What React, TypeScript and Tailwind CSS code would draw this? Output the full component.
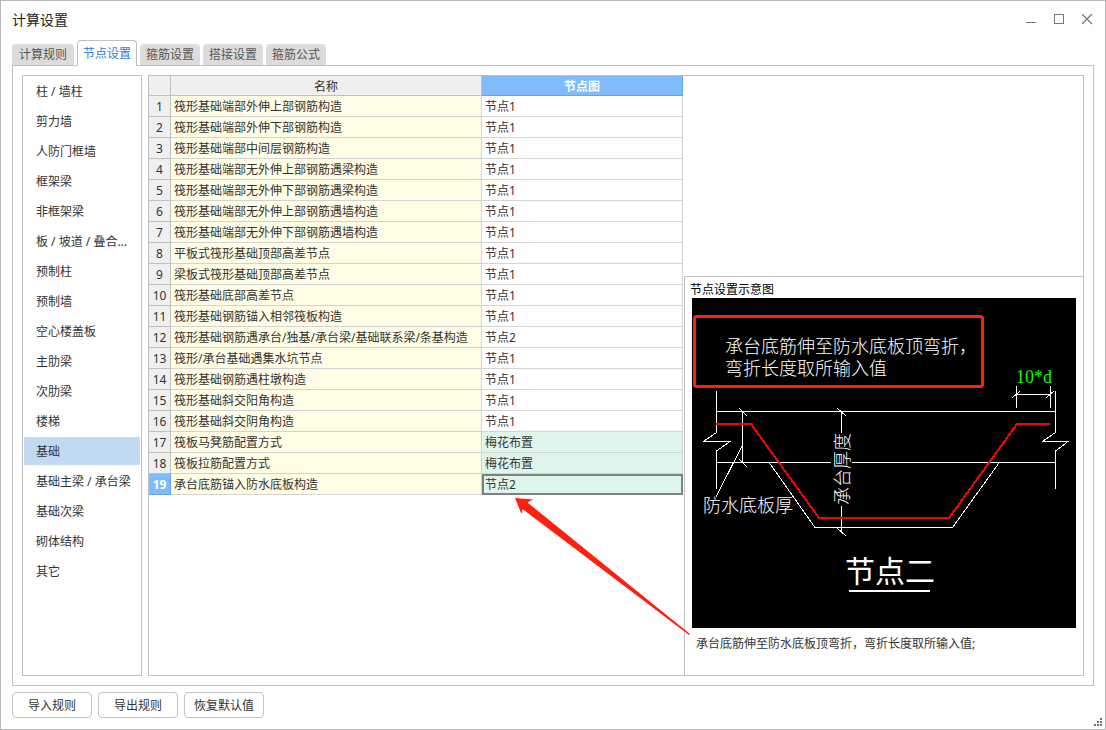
import { useState } from 'react'

interface NodeRow {
    name: string
    node: string
    changed?: boolean
}

const tabs = ['计算规则', '节点设置', '箍筋设置', '搭接设置', '箍筋公式']

const categories = [
    '柱 / 墙柱',
    '剪力墙',
    '人防门框墙',
    '框架梁',
    '非框架梁',
    '板 / 坡道 / 叠合...',
    '预制柱',
    '预制墙',
    '空心楼盖板',
    '主肋梁',
    '次肋梁',
    '楼梯',
    '基础',
    '基础主梁 / 承台梁',
    '基础次梁',
    '砌体结构',
    '其它',
]

const rows: NodeRow[] = [
    { name: '筏形基础端部外伸上部钢筋构造', node: '节点1' },
    { name: '筏形基础端部外伸下部钢筋构造', node: '节点1' },
    { name: '筏形基础端部中间层钢筋构造', node: '节点1' },
    { name: '筏形基础端部无外伸上部钢筋遇梁构造', node: '节点1' },
    { name: '筏形基础端部无外伸下部钢筋遇梁构造', node: '节点1' },
    { name: '筏形基础端部无外伸上部钢筋遇墙构造', node: '节点1' },
    { name: '筏形基础端部无外伸下部钢筋遇墙构造', node: '节点1' },
    { name: '平板式筏形基础顶部高差节点', node: '节点1' },
    { name: '梁板式筏形基础顶部高差节点', node: '节点1' },
    { name: '筏形基础底部高差节点', node: '节点1' },
    { name: '筏形基础钢筋锚入相邻筏板构造', node: '节点1' },
    { name: '筏形基础钢筋遇承台/独基/承台梁/基础联系梁/条基构造', node: '节点2' },
    { name: '筏形/承台基础遇集水坑节点', node: '节点1' },
    { name: '筏形基础钢筋遇柱墩构造', node: '节点1' },
    { name: '筏形基础斜交阳角构造', node: '节点1' },
    { name: '筏形基础斜交阴角构造', node: '节点1' },
    { name: '筏板马凳筋配置方式', node: '梅花布置', changed: true },
    { name: '筏板拉筋配置方式', node: '梅花布置', changed: true },
    { name: '承台底筋锚入防水底板构造', node: '节点2', changed: true },
]

const actions = ['导入规则', '导出规则', '恢复默认值']

function TitleBar() {
    return (
        <header className="flex h-[39px] items-center justify-between pr-3 pb-0.5 pl-[11px]">
            <h1 className="text-sm text-[#222]">计算设置</h1>
            <div className="flex gap-[17px] text-[#777]">
                <button type="button" aria-label="最小化">
                    <svg width="11" height="11" viewBox="0 0 11 11" shapeRendering="crispEdges" className="block">
                        <path d="M0 8.5H10" stroke="currentColor" />
                    </svg>
                </button>
                <button type="button" aria-label="最大化">
                    <svg width="11" height="11" viewBox="0 0 11 11" shapeRendering="crispEdges" className="block">
                        <rect x="0.5" y="0.5" width="9" height="9" fill="none" stroke="currentColor" />
                    </svg>
                </button>
                <button type="button" aria-label="关闭">
                    <svg width="11" height="11" viewBox="0 0 11 11" className="block">
                        <path d="M0 0L10 10M10 0L0 10" stroke="currentColor" strokeWidth="1.3" />
                    </svg>
                </button>
            </div>
        </header>
    )
}

function NodeDiagram() {
    return (
        <svg viewBox="0 0 384 330" className="block w-full bg-black" role="img" aria-label="节点二">
            {/* note frame */}
            <rect x="2.5" y="18.5" width="288" height="70" rx="2" fill="none" stroke="#fd2010" strokeWidth="3" />

            <g fill="none" stroke="#fff" shapeRendering="crispEdges">
                {/* slab edges with break marks */}
                <path d="M24.5 93V134.5L11.5 143.5H38L24.5 153V191" />
                <path d="M363.5 93V134.5L350.5 143.5H376L363.5 153V191" />
                <path d="M24 113.5H364M24 164.5H139M160 164.5H364" />
                {/* pile cap outline */}
                <path d="M77.5 165L123 229.5H260.5L307 165" />
                {/* slab thickness */}
                <path d="M50.5 113V165M47 110L55 118M47 161L55 169M50.5 147L24 199" />
                {/* cap thickness */}
                <path d="M149.5 113V135M149.5 208V234M145 110L154 118M145 230L154 238" />
                {/* bend length */}
                <path d="M324.5 88V110M358.5 88V110M324 96.5H359M320 100L328 93M354 100L362 93" />
            </g>
            <path
                d="M24 126H59L127 220H257L325 126H358"
                fill="none"
                stroke="#f00"
                strokeWidth="2"
                shapeRendering="crispEdges"
            />

            <g fill="#fff" className="text-[18px] font-light">
                <text x="33" y="55">承台底筋伸至防水底板顶弯折，</text>
                <text x="33" y="77">弯折长度取所输入值</text>
                <text x="11" y="214">防水底板厚</text>
                <text transform="translate(157 207) rotate(-90)">承台厚度</text>
            </g>
            <text x="324" y="85" fill="#0f0" className="font-['Liberation_Serif',serif] text-[18px]">
                10*d
            </text>
            <text x="153" y="284" fill="#fff" className="text-[30px]">
                节点二
            </text>
            <path d="M157 293H238" stroke="#fff" strokeWidth="2" />
        </svg>
    )
}

function NodeTable({ selected, onSelect }: { selected: number; onSelect: (index: number) => void }) {
    return (
        <table className="w-[534px] shrink-0 table-fixed border-separate border-spacing-0 self-start text-left">
            <colgroup>
                <col className="w-[22px]" />
                <col className="w-[311px]" />
                <col className="w-[201px]" />
            </colgroup>
            <thead>
                <tr className="h-5 text-center leading-[17px]">
                    <td className="border-r border-b border-[#c0c0c0] bg-[#efefef] p-0"></td>
                    <th scope="col" className="border-r border-b border-[#c0c0c0] bg-[#efefef] p-0 pt-0.5 font-normal">
                        名称
                    </th>
                    <th
                        scope="col"
                        className="border-r border-b border-[#62a5ea] bg-[#80bbfc] p-0 pt-0.5 font-bold text-white"
                    >
                        节点图
                    </th>
                </tr>
            </thead>
            <tbody>
                {rows.map((row, index) => (
                    <tr key={row.name} onClick={() => onSelect(index)} className="h-[21px] leading-[18px]">
                        <th
                            scope="row"
                            className={
                                index === selected
                                    ? 'border-r border-b border-[#62a5ea] bg-[#80bbfc] p-0 pt-0.5 text-center font-bold text-white'
                                    : 'border-r border-b border-[#c0c0c0] bg-[#efefef] p-0 pt-0.5 text-center font-normal'
                            }
                        >
                            {index + 1}
                        </th>
                        <td className="border-r border-b border-[#d3d3d3] bg-[#fffde6] p-0 pt-0.5 pl-[3px] whitespace-nowrap">
                            {row.name}
                        </td>
                        <td
                            className={`border-r border-b border-[#d3d3d3] p-0 pt-0.5 pl-[3px] ${
                                row.changed ? 'bg-[#ddf5eb]' : 'bg-white'
                            } ${index === selected ? 'outline-2 -outline-offset-2 outline-[#808080]' : ''}`}
                        >
                            {row.node}
                        </td>
                    </tr>
                ))}
            </tbody>
        </table>
    )
}

export default function App() {
    const [tab, setTab] = useState('节点设置')
    const [category, setCategory] = useState('基础')
    const [selected, setSelected] = useState(18)

    return (
        <div className="relative flex min-h-screen flex-col border border-[#b8b8b8] bg-white font-['Noto_Sans','Noto_Sans_CJK_SC',sans-serif] text-xs text-[#333]">
            <TitleBar />

            <main className="flex flex-1 flex-col px-[11px]">
                <div role="tablist" className="flex items-end gap-[3px]">
                    {tabs.map((name) => (
                        <button
                            key={name}
                            type="button"
                            role="tab"
                            aria-selected={name === tab}
                            onClick={() => setTab(name)}
                            className={
                                name === tab
                                    ? 'relative -mb-px h-[26px] rounded-t border border-b-0 border-[#c0c0c0] bg-white px-[5px] text-[#2b7de0]'
                                    : 'h-[21px] rounded-t bg-[#dcdcdc] px-1.5 text-[#555] first:px-[7px]'
                            }
                        >
                            {name}
                        </button>
                    ))}
                </div>

                <div className="flex flex-1 gap-1.5 border border-[#c0c0c0] p-[9px]">
                    <ul className="flex w-[120px] shrink-0 flex-col gap-0.5 border border-[#c0c0c0] p-px">
                        {categories.map((name) => (
                            <li key={name}>
                                <button
                                    type="button"
                                    onClick={() => setCategory(name)}
                                    className={`block h-7 w-full pt-0.5 pl-3 text-left whitespace-nowrap ${
                                        name === category ? 'bg-[#c2d9f2]' : ''
                                    }`}
                                >
                                    {name}
                                </button>
                            </li>
                        ))}
                    </ul>

                    <div className="relative flex min-w-0 flex-1 gap-px border border-[#c0c0c0]">
                        <NodeTable selected={selected} onSelect={setSelected} />

                        <div className="flex min-w-0 flex-1 flex-col pt-[200px]">
                            <section className="flex-1 border-t border-l border-[#c0c0c0]">
                                <h2 className="pt-1 pl-[5px] leading-[17px] text-black">节点设置示意图</h2>
                                <div className="px-[7px]">
                                    <NodeDiagram />
                                </div>
                                <p className="mt-2 pl-[11px] leading-4">
                                    承台底筋伸至防水底板顶弯折，弯折长度取所输入值;
                                </p>
                            </section>
                        </div>

                        {/* callout arrow from the note to the selected cell */}
                        <svg
                            width="178"
                            height="139"
                            viewBox="0 0 178 139"
                            className="pointer-events-none absolute top-[421px] left-[365px]"
                            aria-hidden="true"
                        >
                            <path d="M1 1L19 2.5L13.5 5.5L176 137L175 138L8.5 12L7.5 17Z" fill="#fd2010" />
                        </svg>
                    </div>
                </div>
            </main>

            <footer className="flex gap-1.5 px-[11px] pt-1.5 pb-[11px]">
                {actions.map((name) => (
                    <button
                        key={name}
                        type="button"
                        className="h-[26px] w-20 rounded border border-[#c4c4c4] bg-white pt-0.5"
                    >
                        {name}
                    </button>
                ))}
            </footer>

            <svg
                width="8"
                height="8"
                viewBox="0 0 8 8"
                shapeRendering="crispEdges"
                className="absolute right-[3px] bottom-[3px]"
                aria-hidden="true"
            >
                <path d="M6 0h2v2h-2zM3 3h2v2h-2zM6 3h2v2h-2zM0 6h2v2h-2zM3 6h2v2h-2zM6 6h2v2h-2z" fill="#70707c" />
            </svg>
        </div>
    )
}
